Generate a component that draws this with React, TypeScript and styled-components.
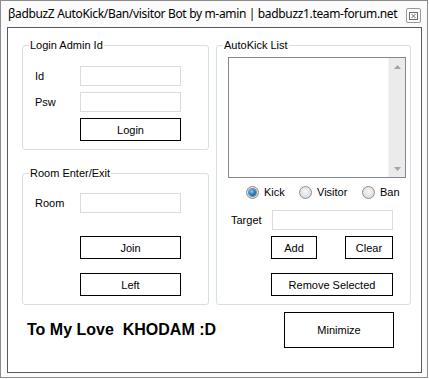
import React from 'react';
import styled, { createGlobalStyle } from 'styled-components';

const Global = createGlobalStyle`
  html, body { margin: 0; padding: 0; background: #fff; }
  body { font-family: "Liberation Sans", Arial, sans-serif; font-size: 11px; color: #000; }
  * { box-sizing: border-box; }
`;

const Window = styled.div`
  width: 428px;
  height: 378px;
  border: 1px solid #8c8c8c;
  background: #fbfbfb;
  display: flex;
  flex-direction: column;
  padding: 0 5px 4px 6px;
`;

const TitleBar = styled.div`
  height: 26px;
  display: flex;
  align-items: flex-start;
  justify-content: space-between;
  padding-left: 1px;
`;

const TitleText = styled.div`
  font-family: "Noto Sans", "Open Sans", sans-serif;
  font-size: 12px;
  letter-spacing: -0.34px;
  line-height: 16px;
  margin-top: 5px;
  white-space: nowrap;
`;

const CloseBox = styled.div`
  width: 15px;
  height: 15px;
  margin-top: 7px;
  margin-right: 1px;
  border: 1px solid #9a9a9a;
  border-radius: 2px;
  background: #fdfdfd;
  display: flex;
  align-items: center;
  justify-content: center;
`;

const Client = styled.div`
  flex: 1;
  border: 1px solid #5a5a5a;
  background: #fff;
  padding: 10px 0 0 14px;
  display: grid;
  grid-template-columns: 187px 195px;
  column-gap: 7px;
  align-content: start;
`;

const Column = styled.div`
  display: flex;
  flex-direction: column;
`;

const GroupBox = styled.fieldset<{ $mt?: number }>`
  margin: ${p => p.$mt ?? 0}px 0 0 0;
  padding: 0;
  min-width: 0;
  border: 1px solid #d5dfe5;
  border-radius: 3px;
`;

const GroupTitle = styled.legend`
  margin-left: 6px;
  padding: 0 1px;
  font-size: 11px;
  line-height: 14px;
  height: 14px;
`;

const FormGrid = styled.div<{ $rowGap: number; $pt: number }>`
  display: grid;
  grid-template-columns: 45px 101px;
  row-gap: ${p => p.$rowGap}px;
  padding: ${p => p.$pt}px 0 8px 12px;
  align-items: center;
`;

const FieldLabel = styled.span`
  font-size: 11px;
  line-height: 13px;
`;

const TextField = styled.input<{ $w: number; $ml?: number }>`
  width: ${p => p.$w}px;
  height: 20px;
  margin: 0 0 0 ${p => p.$ml ?? 0}px;
  padding: 0 3px;
  border: 1px solid #d8dce2;
  background: #fff;
  outline: none;
  font: 11px "Liberation Sans", Arial, sans-serif;
`;

const Button = styled.button<{ $w: number; $h?: number; $mt?: number; $col?: number }>`
  width: ${p => p.$w}px;
  height: ${p => p.$h ?? 23}px;
  margin-top: ${p => p.$mt ?? 0}px;
  grid-column: ${p => p.$col ?? 'auto'};
  padding: 0;
  border: 1px solid #000;
  border-radius: 0;
  background: #fff;
  color: #000;
  font: 11px "Liberation Sans", Arial, sans-serif;
`;

const AutoBody = styled.div`
  display: flex;
  flex-direction: column;
  padding: 5px 0 8px 11px;
`;

const ListBox = styled.div`
  width: 178px;
  height: 121px;
  border: 1px solid #828790;
  background: #fff;
  display: flex;
  justify-content: flex-end;
`;

const ScrollBar = styled.div`
  width: 17px;
  background: #ebebeb;
  border-left: 1px solid #f4f4f4;
  display: flex;
  flex-direction: column;
  justify-content: space-between;
`;

const ScrollArrow = styled.div`
  height: 17px;
  display: flex;
  align-items: center;
  justify-content: center;
`;

const RadioRow = styled.div`
  display: grid;
  grid-template-columns: 53px 63px auto;
  margin-top: 6px;
  padding-left: 18px;
  height: 16px;
  align-items: center;
`;

const RadioItem = styled.label`
  display: flex;
  align-items: center;
  gap: 5px;
  font-size: 11px;
`;

const RadioCircle = styled.span<{ $checked?: boolean }>`
  width: 13px;
  height: 13px;
  border-radius: 50%;
  border: 1px solid #8f8f8f;
  background: radial-gradient(circle at 50% 40%, #f8f8f8 0%, #e2e2e2 55%, #cfcfcf 100%);
  display: flex;
  align-items: center;
  justify-content: center;
  &::after {
    content: '';
    display: ${p => (p.$checked ? 'block' : 'none')};
    width: 7px;
    height: 7px;
    border-radius: 50%;
    background: radial-gradient(circle at 40% 35%, #8fd0f6 0%, #2f7fc0 45%, #17456f 100%);
    box-shadow: 0 0 0 1px #5b8fb8;
  }
`;

const TargetGrid = styled.div`
  display: grid;
  grid-template-columns: 40px 122px;
  margin-top: 10px;
  padding-left: 3px;
  align-items: center;
`;

const ButtonPair = styled.div`
  grid-column: 2;
  display: flex;
  justify-content: space-between;
  margin-top: 6px;
`;

const BottomRow = styled.div`
  grid-column: 1 / -1;
  display: flex;
  align-items: center;
  justify-content: space-between;
  margin-top: 7px;
  padding: 0 17px 0 5px;
`;

const Dedication = styled.div`
  font-family: "Liberation Sans", Arial, sans-serif;
  font-weight: bold;
  font-size: 16px;
  white-space: pre;
`;

export default function App() {
  return (
    <>
      <Global />
      <Window>
        <TitleBar>
          <TitleText>βadbuzZ AutoKick/Ban/visitor Bot by m-amin | badbuzz1.team-forum.net</TitleText>
          <CloseBox>
            <svg width="9" height="8" viewBox="0 0 9 8">
              <rect x="0.5" y="0.5" width="8" height="7" fill="none" stroke="#6a6a6a" />
              <path d="M2.5 2 L6.5 6 M6.5 2 L2.5 6" stroke="#6a6a6a" strokeWidth="1" />
            </svg>
          </CloseBox>
        </TitleBar>
        <Client>
          <Column>
            <GroupBox>
              <GroupTitle>Login Admin Id</GroupTitle>
              <FormGrid $rowGap={6} $pt={14}>
                <FieldLabel>Id</FieldLabel>
                <TextField $w={101} />
                <FieldLabel>Psw</FieldLabel>
                <TextField $w={101} />
                <Button $w={101} $col={2}>Login</Button>
              </FormGrid>
            </GroupBox>
            <GroupBox $mt={16}>
              <GroupTitle>Room Enter/Exit</GroupTitle>
              <FormGrid $rowGap={0} $pt={13}>
                <FieldLabel>Room</FieldLabel>
                <TextField $w={101} />
                <Button $w={101} $col={2} $mt={23}>Join</Button>
                <Button $w={101} $col={2} $mt={14}>Left</Button>
              </FormGrid>
            </GroupBox>
          </Column>
          <GroupBox>
            <GroupTitle>AutoKick List</GroupTitle>
            <AutoBody>
              <ListBox>
                <ScrollBar>
                  <ScrollArrow>
                    <svg width="7" height="4" viewBox="0 0 7 4"><path d="M0 4 L3.5 0 L7 4 Z" fill="#a4a4a4" /></svg>
                  </ScrollArrow>
                  <ScrollArrow>
                    <svg width="7" height="4" viewBox="0 0 7 4"><path d="M0 0 L7 0 L3.5 4 Z" fill="#a4a4a4" /></svg>
                  </ScrollArrow>
                </ScrollBar>
              </ListBox>
              <RadioRow>
                <RadioItem><RadioCircle $checked />Kick</RadioItem>
                <RadioItem><RadioCircle />Visitor</RadioItem>
                <RadioItem><RadioCircle />Ban</RadioItem>
              </RadioRow>
              <TargetGrid>
                <FieldLabel>Target</FieldLabel>
                <TextField $w={121} $ml={1} />
                <ButtonPair>
                  <Button $w={46}>Add</Button>
                  <Button $w={48}>Clear</Button>
                </ButtonPair>
                <Button $w={122} $col={2} $mt={14}>Remove Selected</Button>
              </TargetGrid>
            </AutoBody>
          </GroupBox>
          <BottomRow>
            <Dedication>To My Love  KHODAM :D</Dedication>
            <Button $w={110} $h={36}>Minimize</Button>
          </BottomRow>
        </Client>
      </Window>
    </>
  );
}
